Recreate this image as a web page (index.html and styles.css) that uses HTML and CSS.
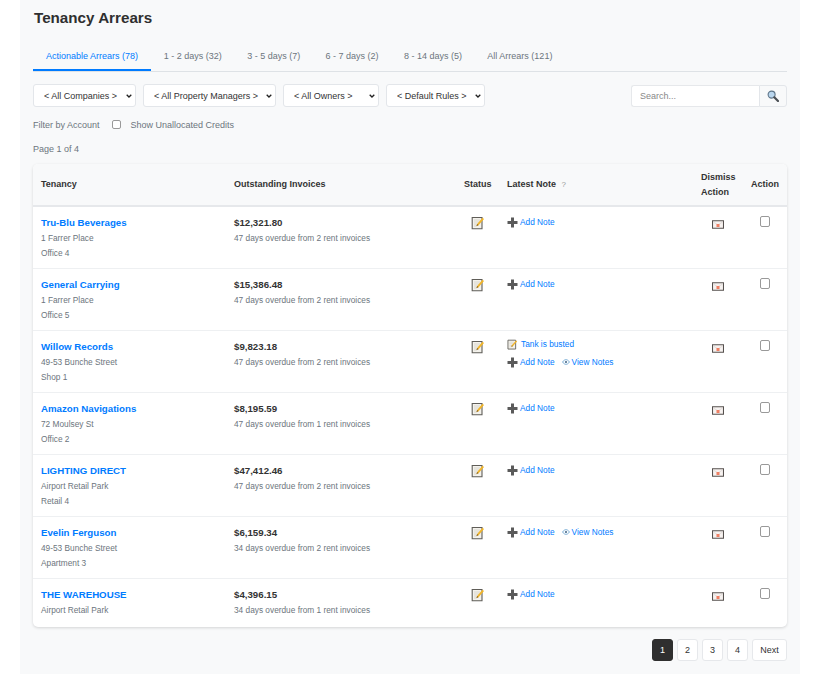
FILE: index.html
```html
<!DOCTYPE html>
<html lang="en">

<head>
    <meta charset="UTF-8">
    <meta name="viewport" content="width=device-width, initial-scale=1.0">
    <title>Tenancy Arrears</title>
    <link rel="stylesheet" href="styles.css">
</head>

<body>
    <svg class="sprites" width="0" height="0">
        <symbol id="i-note" viewBox="0 0 14 14">
            <path d="M1.200 1.500h9.800v11.300h-9.800z" fill="#f4f2ec" stroke="#5f5d58" stroke-width="1.100"/>
            <path d="M3 4h6M3 6h5M3 8h3M3 10h3" stroke="#d2cfc6" stroke-width=".8"/>
            <path d="M5.500 10l.6-2 5.400-6.200 1.500 1.200-5.500 6.200z" fill="#f0b429"/>
            <path d="M5.500 10l.6-2 1.400 1.200z" fill="#7a5a2a"/>
        </symbol>
        <symbol id="i-plus" viewBox="0 0 11 11">
            <path d="M4 .5h3v3.500h3.500v3h-3.500v3.500h-3v-3.500h-3.500v-3h3.500z" fill="#5a5a5a"/>
        </symbol>
        <symbol id="i-eye" viewBox="0 0 9 7">
            <path d="M.5 3.500c2-3.600 6-3.600 8 0-2 3.600-6 3.600-8 0z" fill="none" stroke="#4a90c8" stroke-width=".8"/>
            <circle cx="4.500" cy="3.500" r="1.300" fill="#4a6a88"/>
        </symbol>
        <symbol id="i-dismiss" viewBox="0 0 12 9">
            <path d="M.5.8h11v7.400h-11z" fill="#f7f2f0" stroke="#55504e" stroke-width="1.100"/>
            <path d="M1.500 2l4.500 3 4.500-3" fill="none" stroke="#d9d4d0" stroke-width=".7"/>
            <rect x="4.500" y="4" width="3" height="3" fill="#ef7f63"/>
        </symbol>
        <symbol id="i-search" viewBox="0 0 12 12">
            <circle cx="4.600" cy="4.600" r="3.500" fill="#b9d6ee" stroke="#5d7488" stroke-width="1.100"/>
            <path d="M7.300 7.300l3.700 3.700" stroke="#4a4f54" stroke-width="2.200" stroke-linecap="round"/>
        </symbol>
    </svg>

    <div class="page">
        <h1 class="page-title">Tenancy Arrears</h1>

        <nav class="tabs">
            <a href="#" class="tab active">Actionable Arrears (78)</a>
            <a href="#" class="tab">1 - 2 days (32)</a>
            <a href="#" class="tab">3 - 5 days (7)</a>
            <a href="#" class="tab">6 - 7 days (2)</a>
            <a href="#" class="tab">8 - 14 days (5)</a>
            <a href="#" class="tab">All Arrears (121)</a>
        </nav>

        <div class="filters">
            <select class="filter filter-companies"><option>&lt; All Companies &gt;</option></select>
            <select class="filter filter-managers"><option>&lt; All Property Managers &gt;</option></select>
            <select class="filter filter-owners"><option>&lt; All Owners &gt;</option></select>
            <select class="filter filter-rules"><option>&lt; Default Rules &gt;</option></select>
            <div class="search">
                <input class="search-input" type="text" placeholder="Search...">
                <button class="search-button" type="button"><svg class="icon-search"><use href="#i-search"/></svg></button>
            </div>
        </div>

        <div class="account-filter">
            <span>Filter by Account</span>
            <label class="credits"><input type="checkbox" class="tick"> Show Unallocated Credits</label>
        </div>

        <p class="page-count">Page 1 of 4</p>

        <div class="table-card">
            <table class="arrears">
                <colgroup>
                    <col class="col-tenancy">
                    <col class="col-invoices">
                    <col class="col-status">
                    <col class="col-note">
                    <col class="col-dismiss">
                    <col class="col-action">
                </colgroup>
                <thead>
                    <tr>
                        <th>Tenancy</th>
                        <th>Outstanding Invoices</th>
                        <th>Status</th>
                        <th>Latest Note <span class="help">?</span></th>
                        <th>Dismiss Action</th>
                        <th>Action</th>
                    </tr>
                </thead>
                <tbody>
                    <tr>
                        <td><a href="#" class="tenant">Tru-Blu Beverages</a><div class="sub">1 Farrer Place</div><div class="sub">Office 4</div></td>
                        <td><div class="amount">$12,321.80</div><div class="sub">47 days overdue from 2 rent invoices</div></td>
                        <td><svg class="icon-note"><use href="#i-note"/></svg></td>
                        <td><div class="note-links"><a href="#" class="note-link"><svg class="icon-plus"><use href="#i-plus"/></svg>Add Note</a></div></td>
                        <td class="dismiss"><svg class="icon-dismiss"><use href="#i-dismiss"/></svg></td>
                        <td class="check"><input type="checkbox" class="tick"></td>
                    </tr>
                    <tr>
                        <td><a href="#" class="tenant">General Carrying</a><div class="sub">1 Farrer Place</div><div class="sub">Office 5</div></td>
                        <td><div class="amount">$15,386.48</div><div class="sub">47 days overdue from 2 rent invoices</div></td>
                        <td><svg class="icon-note"><use href="#i-note"/></svg></td>
                        <td><div class="note-links"><a href="#" class="note-link"><svg class="icon-plus"><use href="#i-plus"/></svg>Add Note</a></div></td>
                        <td class="dismiss"><svg class="icon-dismiss"><use href="#i-dismiss"/></svg></td>
                        <td class="check"><input type="checkbox" class="tick"></td>
                    </tr>
                    <tr>
                        <td><a href="#" class="tenant">Willow Records</a><div class="sub">49-53 Bunche Street</div><div class="sub">Shop 1</div></td>
                        <td><div class="amount">$9,823.18</div><div class="sub">47 days overdue from 2 rent invoices</div></td>
                        <td><svg class="icon-note"><use href="#i-note"/></svg></td>
                        <td>
                            <div class="latest-note"><a href="#" class="note-link"><svg class="icon-note-small"><use href="#i-note"/></svg>Tank is busted</a></div>
                            <div class="note-links"><a href="#" class="note-link"><svg class="icon-plus"><use href="#i-plus"/></svg>Add Note</a><a href="#" class="note-link"><svg class="icon-eye"><use href="#i-eye"/></svg>View Notes</a></div>
                        </td>
                        <td class="dismiss"><svg class="icon-dismiss"><use href="#i-dismiss"/></svg></td>
                        <td class="check"><input type="checkbox" class="tick"></td>
                    </tr>
                    <tr>
                        <td><a href="#" class="tenant">Amazon Navigations</a><div class="sub">72 Moulsey St</div><div class="sub">Office 2</div></td>
                        <td><div class="amount">$8,195.59</div><div class="sub">47 days overdue from 1 rent invoices</div></td>
                        <td><svg class="icon-note"><use href="#i-note"/></svg></td>
                        <td><div class="note-links"><a href="#" class="note-link"><svg class="icon-plus"><use href="#i-plus"/></svg>Add Note</a></div></td>
                        <td class="dismiss"><svg class="icon-dismiss"><use href="#i-dismiss"/></svg></td>
                        <td class="check"><input type="checkbox" class="tick"></td>
                    </tr>
                    <tr>
                        <td><a href="#" class="tenant">LIGHTING DIRECT</a><div class="sub">Airport Retail Park</div><div class="sub">Retail 4</div></td>
                        <td><div class="amount">$47,412.46</div><div class="sub">47 days overdue from 2 rent invoices</div></td>
                        <td><svg class="icon-note"><use href="#i-note"/></svg></td>
                        <td><div class="note-links"><a href="#" class="note-link"><svg class="icon-plus"><use href="#i-plus"/></svg>Add Note</a></div></td>
                        <td class="dismiss"><svg class="icon-dismiss"><use href="#i-dismiss"/></svg></td>
                        <td class="check"><input type="checkbox" class="tick"></td>
                    </tr>
                    <tr>
                        <td><a href="#" class="tenant">Evelin Ferguson</a><div class="sub">49-53 Bunche Street</div><div class="sub">Apartment 3</div></td>
                        <td><div class="amount">$6,159.34</div><div class="sub">34 days overdue from 2 rent invoices</div></td>
                        <td><svg class="icon-note"><use href="#i-note"/></svg></td>
                        <td><div class="note-links"><a href="#" class="note-link"><svg class="icon-plus"><use href="#i-plus"/></svg>Add Note</a><a href="#" class="note-link"><svg class="icon-eye"><use href="#i-eye"/></svg>View Notes</a></div></td>
                        <td class="dismiss"><svg class="icon-dismiss"><use href="#i-dismiss"/></svg></td>
                        <td class="check"><input type="checkbox" class="tick"></td>
                    </tr>
                    <tr class="last-row">
                        <td><a href="#" class="tenant">THE WAREHOUSE</a><div class="sub">Airport Retail Park</div></td>
                        <td><div class="amount">$4,396.15</div><div class="sub">34 days overdue from 1 rent invoices</div></td>
                        <td><svg class="icon-note"><use href="#i-note"/></svg></td>
                        <td><div class="note-links"><a href="#" class="note-link"><svg class="icon-plus"><use href="#i-plus"/></svg>Add Note</a></div></td>
                        <td class="dismiss"><svg class="icon-dismiss"><use href="#i-dismiss"/></svg></td>
                        <td class="check"><input type="checkbox" class="tick"></td>
                    </tr>
                </tbody>
            </table>
        </div>

        <div class="pagination">
            <a href="#" class="page-btn current">1</a>
            <a href="#" class="page-btn">2</a>
            <a href="#" class="page-btn">3</a>
            <a href="#" class="page-btn">4</a>
            <a href="#" class="page-btn next">Next</a>
        </div>
    </div>
</body>

</html>
```

FILE: styles.css
```css
body {
    font-family: "Liberation Sans", Arial, sans-serif;
    margin: 0;
    padding: 0;
    background: #fff;
    color: #333;
}

.sprites {
    display: block;
    height: 0;
}

.page {
    width: 754px;
    height: 674px;
    margin-left: 20px;
    padding: 0 13px;
    background: #f8f9fa;
}

.page-title {
    margin: 0;
    padding: 9px 0 1px 1px;
    font-size: 15.2px;
    line-height: 18px;
    font-weight: bold;
    color: #2f2f2f;
}

.tabs {
    display: flex;
    margin-top: 15px;
    height: 28px;
    border-bottom: 1px solid #dee2e6;
}

.tab {
    height: 28px;
    padding: 6px 12.7px 0;
    box-sizing: border-box;
    font-size: 9px;
    line-height: 15px;
    color: #6c757d;
    text-decoration: none;
}

.tab.active {
    padding: 6px 13px 0;
    color: #007bff;
    border-bottom: 2px solid #007bff;
}

.filters {
    display: flex;
    gap: 7px;
    margin-top: 12px;
    height: 23px;
}

.filter {
    appearance: none;
    height: 23px;
    padding: 0 12px 0 10px;
    font-family: inherit;
    font-size: 9px;
    color: #333;
    background: #fff url("data:image/svg+xml,%3Csvg xmlns='http://www.w3.org/2000/svg' width='6' height='4'%3E%3Cpath d='M.7.7L3 3l2.300-2.300' fill='none' stroke='%23222' stroke-width='1.300'/%3E%3C/svg%3E") no-repeat right 3px center;
    border: 1px solid #e3e6ea;
    border-radius: 3px;
}

.filter-companies { width: 103px; }
.filter-managers { width: 133px; }
.filter-owners { width: 96px; }
.filter-rules { width: 99px; }

.search {
    display: flex;
    margin-left: auto;
    height: 22px;
    margin-top: 1px;
}

.search-input {
    width: 128px;
    box-sizing: border-box;
    padding: 0 8px;
    font-family: inherit;
    font-size: 9px;
    background: #fff;
    border: 1px solid #e6e8eb;
    border-right: 0;
    border-radius: 3px 0 0 3px;
}

.search-input::placeholder {
    color: #888;
}

.search-button {
    width: 28px;
    padding: 0;
    display: flex;
    align-items: center;
    justify-content: center;
    background: #f8f9fa;
    border: 1px solid #e3e6ea;
    border-radius: 0 3px 3px 0;
}

.icon-search {
    width: 12px;
    height: 12px;
}

.account-filter {
    display: flex;
    align-items: center;
    margin-top: 10px;
    height: 15px;
    font-size: 9px;
    color: #6c757d;
}

.credits {
    display: flex;
    align-items: center;
    margin-left: 12px;
    gap: 10px;
}

.tick {
    appearance: none;
    box-sizing: border-box;
    display: block;
    width: 9px;
    height: 9px;
    margin: 0;
    background: #fff;
    border: 1px solid #999;
    border-radius: 2px;
}

.page-count {
    margin: 10px 0 0;
    font-size: 9px;
    line-height: 15px;
    color: #6c757d;
}

.table-card {
    margin-top: 7px;
    background: #fff;
    border-radius: 5px;
    box-shadow: 0 1px 3px rgba(0, 0, 0, 0.15);
    overflow: hidden;
}

.arrears {
    width: 754px;
    border-collapse: collapse;
    table-layout: fixed;
}

.col-tenancy { width: 193px; }
.col-invoices { width: 230px; }
.col-status { width: 43px; }
.col-note { width: 194px; }
.col-dismiss { width: 50px; }
.col-action { width: 44px; }

.arrears th {
    height: 41px;
    padding: 0 8px;
    background: #f8f9fa;
    border-bottom: 2px solid #e6e8eb;
    font-size: 9px;
    line-height: 15px;
    font-weight: bold;
    text-align: left;
    color: #333;
}

.help {
    margin-left: 3px;
    font-weight: normal;
    font-size: 8px;
    color: #999;
}

.arrears td {
    height: 62px;
    padding: 8px 8px 0;
    box-sizing: border-box;
    border-bottom: 1px solid #eef0f2;
    vertical-align: top;
    font-size: 9px;
}

.arrears .last-row td {
    height: 49px;
    border-bottom: 0;
}

.tenant {
    display: block;
    font-size: 9.7px;
    line-height: 15px;
    font-weight: bold;
    color: #007bff;
    text-decoration: none;
}

.amount {
    font-size: 9.7px;
    line-height: 15px;
    font-weight: bold;
    color: #333;
}

.sub {
    margin-top: 1px;
    font-size: 8.3px;
    line-height: 15px;
    color: #6c757d;
}

.sub + .sub {
    margin-top: 0;
}

.icon-note {
    width: 14px;
    height: 14px;
    display: block;
    margin: 1px 0 0 7px;
}

.note-links {
    display: flex;
    gap: 7px;
    height: 15px;
    align-items: center;
}

.latest-note {
    height: 15px;
    margin: -2px 0 3px;
    display: flex;
    align-items: center;
}

.note-link {
    display: flex;
    align-items: center;
    font-size: 8.3px;
    line-height: 15px;
    color: #007bff;
    text-decoration: none;
}

.icon-plus {
    width: 11px;
    height: 11px;
    margin-right: 2px;
}

.icon-eye {
    width: 8px;
    height: 6px;
    margin-right: 2px;
}

.icon-note-small {
    width: 11px;
    height: 11px;
    margin-right: 3px;
}

.dismiss {
    text-align: center;
}

.icon-dismiss {
    width: 12px;
    height: 9px;
    display: block;
    margin: 5px auto 0;
}

.check .tick {
    width: 10px;
    height: 11px;
    margin: 1px 0 0 9px;
}

.pagination {
    display: flex;
    justify-content: flex-end;
    gap: 4px;
    margin-top: 12px;
}

.page-btn {
    min-width: 21px;
    height: 22px;
    box-sizing: border-box;
    display: flex;
    align-items: center;
    justify-content: center;
    background: #fff;
    border: 1px solid #e6e8eb;
    border-radius: 3px;
    font-size: 9px;
    color: #333;
    text-decoration: none;
}

.page-btn.current {
    background: #2f2f2f;
    border-color: #2f2f2f;
    color: #fff;
}

.page-btn.next {
    width: 35px;
}
```
